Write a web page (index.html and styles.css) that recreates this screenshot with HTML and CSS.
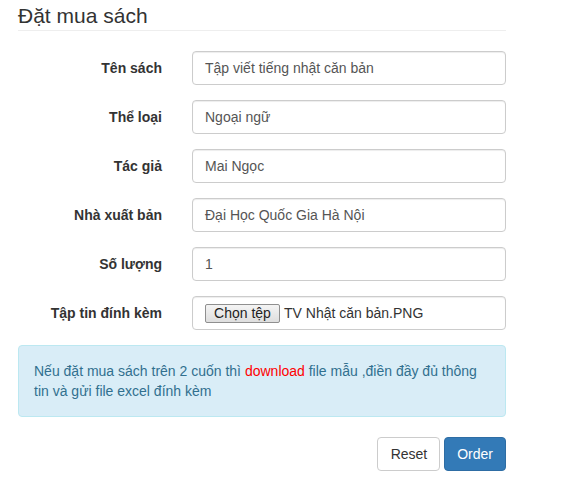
FILE: index.html
```html
<!DOCTYPE html>
<html lang="vi">
<head>
<meta charset="utf-8">
<title>Đặt mua sách</title>
<link rel="stylesheet" href="styles.css">
</head>
<body>
<div class="wrap">
  <h3 class="title">Đặt mua sách</h3>
  <form class="form">
    <div class="group">
      <label class="label">Tên sách</label>
      <div class="control">Tập viết tiếng nhật căn bản</div>
    </div>
    <div class="group">
      <label class="label">Thể loại</label>
      <div class="control">Ngoại ngữ</div>
    </div>
    <div class="group">
      <label class="label">Tác giả</label>
      <div class="control">Mai Ngọc</div>
    </div>
    <div class="group">
      <label class="label">Nhà xuất bản</label>
      <div class="control">Đại Học Quốc Gia Hà Nội</div>
    </div>
    <div class="group">
      <label class="label">Số lượng</label>
      <div class="control">1</div>
    </div>
    <div class="group">
      <label class="label">Tập tin đính kèm</label>
      <div class="control file"><span class="file-btn">Chọn tệp</span><span class="file-name">TV Nhật căn bản.PNG</span></div>
    </div>
    <div class="alert">Nếu đặt mua sách trên 2 cuốn thì <a class="dl">download</a> file mẫu ,điền đầy đủ thông tin và gửi file excel đính kèm</div>
    <div class="actions">
      <button type="button" class="btn btn-default">Reset</button>
      <button type="button" class="btn btn-primary">Order</button>
    </div>
  </form>
</div>
</body>
</html>
```

FILE: styles.css
```css
* { box-sizing: border-box; }
html, body { margin: 0; padding: 0; background: #fff; }
body {
  font-family: "Liberation Sans", Arial, sans-serif;
  font-size: 14px;
  line-height: 20px;
  color: #333;
}
.wrap {
  width: 488px;
  margin-left: 18px;
}
.title {
  margin: 5px 0 20px;
  padding-bottom: 3px;
  font-size: 21px;
  line-height: 22px;
  font-weight: normal;
  color: #333;
  border-bottom: 1px solid #eee;
}
.group {
  display: grid;
  grid-template-columns: 144px 1fr;
  column-gap: 30px;
  margin-bottom: 15px;
}
.label {
  text-align: right;
  font-weight: bold;
  padding-top: 7px;
  line-height: 20px;
}
.control {
  height: 34px;
  padding: 6px 12px;
  border: 1px solid #ccc;
  border-radius: 4px;
  color: #555;
  line-height: 20px;
  box-shadow: inset 0 1px 1px rgba(0,0,0,.075);
  white-space: nowrap;
}
.control.file {
  display: flex;
  align-items: center;
  color: #333;
}
.file-btn {
  height: 19px;
  width: 75px;
  line-height: 17px;
  text-align: center;
  border: 1px solid #8f8f8f;
  border-radius: 2px;
  background: linear-gradient(#f4f4f4, #dedede);
  color: #222;
}
.file-name {
  margin-left: 4px;
}
.alert {
  padding: 15px;
  border: 1px solid #bce8f1;
  border-radius: 4px;
  background: #d9edf7;
  color: #31708f;
  margin-bottom: 20px;
}
.dl { color: #f00; }
.actions {
  display: flex;
  justify-content: flex-end;
  gap: 4px;
}
.btn {
  height: 34px;
  padding: 6px 12px;
  font-family: inherit;
  font-size: 14px;
  line-height: 20px;
  border: 1px solid transparent;
  border-radius: 4px;
}
.btn-default {
  padding: 6px 12px 6px 13px;
  background: #fff;
  border-color: #ccc;
  color: #333;
}
.btn-primary {
  background: #337ab7;
  border-color: #2e6da4;
  color: #fff;
}
```
